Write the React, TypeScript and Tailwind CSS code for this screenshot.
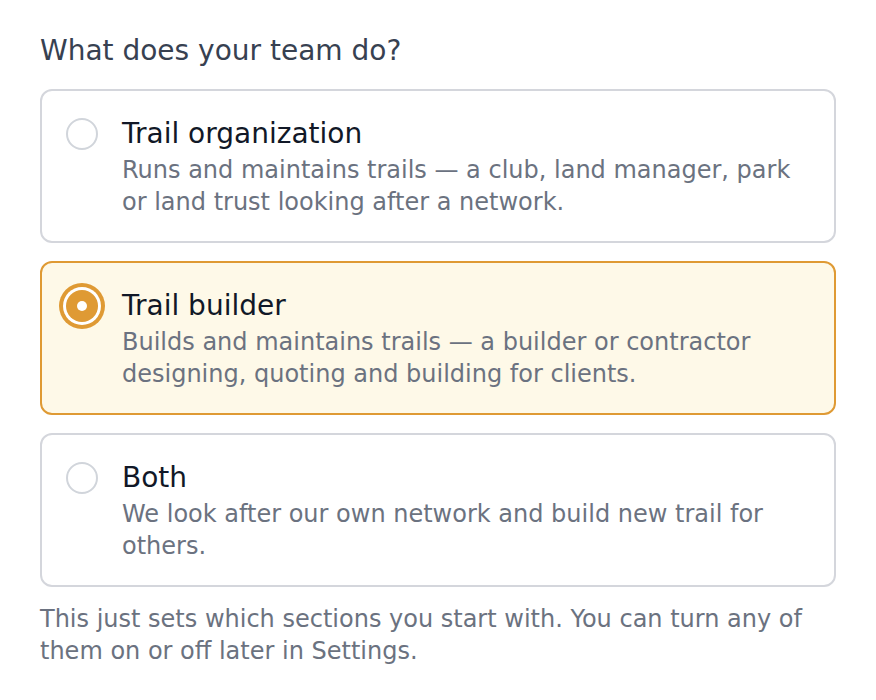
import { useState } from "react";

const options = [
  {
    id: "org",
    title: "Trail organization",
    body: "Runs and maintains trails — a club, land manager, park or land trust looking after a network.",
  },
  {
    id: "builder",
    title: "Trail builder",
    body: "Builds and maintains trails — a builder or contractor designing, quoting and building for clients.",
  },
  {
    id: "both",
    title: "Both",
    body: "We look after our own network and build new trail for others.",
  },
];

const App = () => {
  const [selected, setSelected] = useState("builder");

  return (
    <div className="min-h-screen bg-white px-10 pt-[32.5px] font-['DejaVu_Sans',sans-serif]">
      <h2 className="mb-[20.5px] text-[28px] leading-[36px] text-[#374151]">
        What does your team do?
      </h2>

      <div className="flex flex-col gap-[18px]">
        {options.map((opt) => {
          const active = opt.id === selected;
          return (
            <button
              key={opt.id}
              type="button"
              onClick={() => setSelected(opt.id)}
              className={`flex w-full gap-6 rounded-[12px] border-2 px-[24px] pt-[24.5px] pb-[23.5px] text-left ${
                active
                  ? "border-[#df9a34] bg-[#fef9e8]"
                  : "border-[#d4d6dc] bg-white"
              }`}
            >
              {active ? (
                <span className="mt-[2.5px] flex size-8 shrink-0 items-center justify-center rounded-full bg-[#df9a34] ring-4 ring-[#df9a34] ring-offset-[3px] ring-offset-white">
                  <span className="size-[10px] rounded-full bg-white" />
                </span>
              ) : (
                <span className="mt-[2.5px] size-8 shrink-0 rounded-full border-2 border-[#d1d5db] bg-white" />
              )}
              <span className="block">
                <span className="block text-[28px] leading-[36px] text-[#111827]">
                  {opt.title}
                </span>
                <span className="mt-[2px] block text-[24px] leading-[32px] text-[#6b7280]">
                  {opt.body}
                </span>
              </span>
            </button>
          );
        })}
      </div>

      <p className="mt-[16px] text-[24px] leading-[32px] text-[#6b7280]">
        This just sets which sections you start with. You can turn any of them
        on or off later in Settings.
      </p>
    </div>
  );
};

export default App;
